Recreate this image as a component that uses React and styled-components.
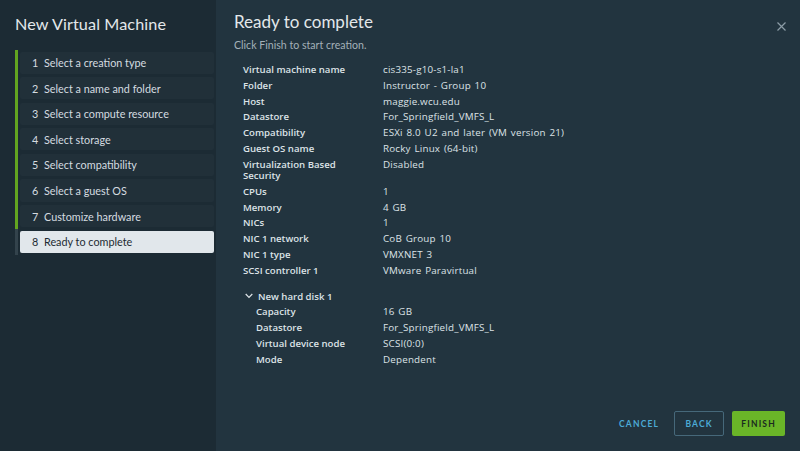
import React from 'react'
import styled, { createGlobalStyle } from 'styled-components'

const Global = createGlobalStyle`
  html, body { margin: 0; padding: 0; }
  body {
    background: #22343f;
    font-family: Lato, "Open Sans", sans-serif;
    -webkit-font-smoothing: antialiased;
  }
`

const Wizard = styled.div`
  display: flex;
  width: 800px;
  height: 451px;
  overflow: hidden;
`

const Sidebar = styled.aside`
  width: 216px;
  flex-shrink: 0;
  background: #1c2b34;
  padding: 13px 0 0 15px;
  box-sizing: border-box;
`

const WizardTitle = styled.h1`
  margin: 0 0 15px;
  font-size: 16.2px;
  font-weight: 400;
  color: #e3e8eb;
  line-height: 22px;
  letter-spacing: 0.1px;
`

const Steps = styled.ol`
  list-style: none;
  margin: 0;
  padding: 0;
`

const Step = styled.li`
  display: flex;
  height: 25.6px;
  border-left: 3px solid ${p => (p.done ? '#62a420' : '#33434c')};
`

const StepBox = styled.div`
  flex: 1;
  display: flex;
  align-items: center;
  margin: 1.5px 2px 2px 2px;
  padding-left: 12px;
  border-radius: 2px;
  background: ${p => (p.active ? '#e1e7eb' : '#213039')};
  color: ${p => (p.active ? '#1c2a32' : '#d5dce0')};
  font-size: 10.8px;
`

const StepNum = styled.span`
  width: 12px;
`

const Main = styled.main`
  flex: 1;
  display: flex;
  flex-direction: column;
  padding: 11px 14px 15px 18px;
  box-sizing: border-box;
`

const Header = styled.div`
  display: flex;
  justify-content: space-between;
  align-items: flex-start;
`

const Title = styled.h2`
  margin: 0;
  font-size: 17px;
  font-weight: 400;
  color: #e3e8eb;
  line-height: 22px;
`

const Close = styled.button`
  background: none;
  border: 0;
  padding: 0;
  margin-top: 11px;
  cursor: pointer;
  display: flex;
`

const Subtitle = styled.p`
  margin: 6px 0 13px;
  font-size: 10.6px;
  color: #a4b1b9;
`

const Details = styled.dl`
  display: grid;
  grid-template-columns: 140px 1fr;
  row-gap: 4.6px;
  margin: 0;
  padding-left: 9px;
  font-family: "Open Sans", Lato, sans-serif;
  font-size: 9.6px;
  line-height: 11.2px;
  color: #dde3e7;
`

const Label = styled.dt`
  font-weight: 600;
  padding-left: ${p => (p.indent ? '13px' : '0')};
  max-width: 112px;
`

const Value = styled.dd`
  margin: 0;
  font-size: 9.8px;
  letter-spacing: 0.2px;
  word-spacing: 1px;
`

const Group = styled.dt`
  grid-column: 1 / -1;
  display: flex;
  align-items: center;
  gap: 5px;
  font-weight: 600;
  margin: 10px 0 0 2px;
`

const Footer = styled.div`
  margin-top: auto;
  display: flex;
  justify-content: flex-end;
  align-items: center;
  gap: 8px;
  padding-right: 1px;
`

const Button = styled.button`
  height: 25px;
  min-width: ${p => (p.kind === 'link' ? '0' : '50px')};
  padding: 0 ${p => (p.kind === 'link' ? '6px' : '8px')};
  border-radius: 2px;
  font-family: inherit;
  font-size: 8.5px;
  font-weight: 700;
  letter-spacing: 1.2px;
  cursor: pointer;
  border: 1px solid ${p => (p.kind === 'outline' ? '#46687a' : 'transparent')};
  background: ${p => (p.kind === 'primary' ? '#6ab528' : 'transparent')};
  color: ${p => (p.kind === 'primary' ? '#1a2a20' : '#4cabd6')};
`

const steps = [
  'Select a creation type',
  'Select a name and folder',
  'Select a compute resource',
  'Select storage',
  'Select compatibility',
  'Select a guest OS',
  'Customize hardware',
  'Ready to complete',
]

const rows = [
  ['Virtual machine name', 'cis335-g10-s1-la1'],
  ['Folder', 'Instructor - Group 10'],
  ['Host', 'maggie.wcu.edu'],
  ['Datastore', 'For_Springfield_VMFS_L'],
  ['Compatibility', 'ESXi 8.0 U2 and later (VM version 21)'],
  ['Guest OS name', 'Rocky Linux (64-bit)'],
  ['Virtualization Based Security', 'Disabled'],
  ['CPUs', '1'],
  ['Memory', '4 GB'],
  ['NICs', '1'],
  ['NIC 1 network', 'CoB Group 10'],
  ['NIC 1 type', 'VMXNET 3'],
  ['SCSI controller 1', 'VMware Paravirtual'],
]

const disk = [
  ['Capacity', '16 GB'],
  ['Datastore', 'For_Springfield_VMFS_L'],
  ['Virtual device node', 'SCSI(0:0)'],
  ['Mode', 'Dependent'],
]

export default function App() {
  const current = 7
  return (
    <Wizard>
      <Global />
      <Sidebar>
        <WizardTitle>New Virtual Machine</WizardTitle>
        <Steps>
          {steps.map((s, i) => (
            <Step key={s} done={i < current}>
              <StepBox active={i === current}>
                <StepNum>{i + 1}</StepNum>
                {s}
              </StepBox>
            </Step>
          ))}
        </Steps>
      </Sidebar>
      <Main>
        <Header>
          <Title>Ready to complete</Title>
          <Close aria-label="Close">
            <svg width="9" height="9" viewBox="0 0 9 9">
              <path d="M0.5 0.5 L8.5 8.5 M8.5 0.5 L0.5 8.5" stroke="#8c9ca6" strokeWidth="1.2" />
            </svg>
          </Close>
        </Header>
        <Subtitle>Click Finish to start creation.</Subtitle>
        <Details>
          {rows.map(([k, v]) => (
            <React.Fragment key={k}>
              <Label>{k}</Label>
              <Value>{v}</Value>
            </React.Fragment>
          ))}
          <Group>
            <svg width="8" height="6" viewBox="0 0 8 6">
              <path d="M0.7 1 L4 4.5 L7.3 1" fill="none" stroke="#dde3e7" strokeWidth="1.2" />
            </svg>
            New hard disk 1
          </Group>
          {disk.map(([k, v]) => (
            <React.Fragment key={'d' + k}>
              <Label indent>{k}</Label>
              <Value>{v}</Value>
            </React.Fragment>
          ))}
        </Details>
        <Footer>
          <Button kind="link">CANCEL</Button>
          <Button kind="outline">BACK</Button>
          <Button kind="primary">FINISH</Button>
        </Footer>
      </Main>
    </Wizard>
  )
}
